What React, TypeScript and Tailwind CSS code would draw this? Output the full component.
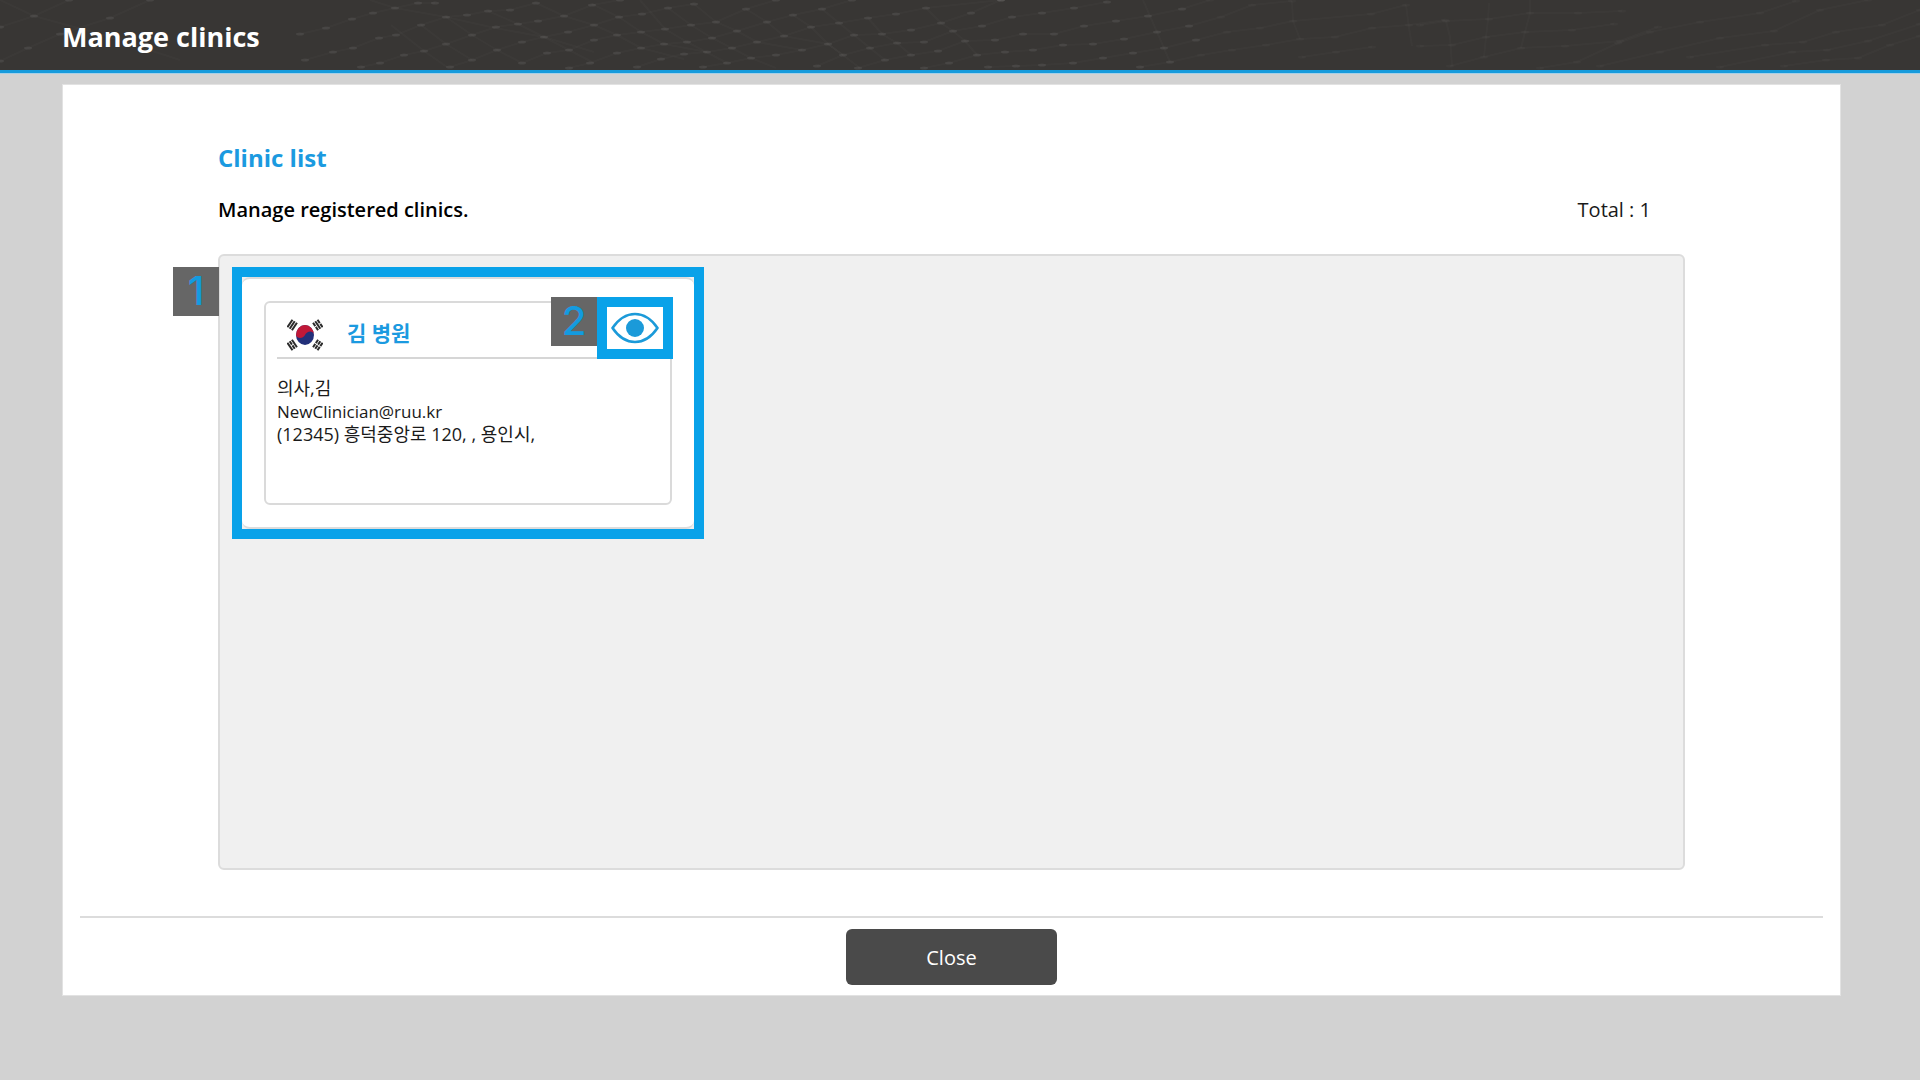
import React from "react";

type Row = [number, number][];

/* Rows of mesh nodes running behind the header title. */
const MESH_ROWS: Row[] = [
  [[0, 27], [34, 16], [69, 0]],
  [[0, 61], [28, 48], [60, 34], [110, 18], [150, 0]],
  [[300, 34], [326, 28], [352, 19], [373, 13], [395, 8], [418, 3], [435, 3]],
  [[305, 60], [333, 52], [353, 48], [379, 38], [396, 35], [421, 25], [446, 17], [467, 15], [488, 11], [510, 10], [536, 3]],
  [[361, 67], [380, 63], [404, 55], [424, 51], [446, 44], [472, 35], [496, 27], [518, 24], [538, 21], [564, 16], [592, 5], [620, 0]],
  [[450, 67], [472, 60], [497, 50], [522, 42], [544, 37], [568, 32], [594, 25], [619, 17], [642, 14], [668, 8], [694, 4]],
  [[522, 63], [547, 53], [569, 50], [594, 40], [617, 35], [641, 32], [665, 29], [691, 25], [716, 22], [746, 9], [776, 0]],
  [[569, 68], [590, 63], [617, 53], [641, 48], [664, 44], [687, 42], [712, 38], [737, 31], [767, 22], [793, 15], [822, 9], [852, 0]],
  [[637, 67], [661, 59], [684, 54], [707, 52], [732, 48], [757, 42], [784, 36], [811, 27], [839, 23], [868, 18], [896, 14], [926, 8], [1001, 0]],
  [[703, 67], [727, 63], [751, 58], [776, 55], [802, 50], [828, 44], [854, 35], [882, 34], [911, 30], [941, 23], [971, 13], [1001, 0]],
  [[817, 66], [843, 55], [870, 48], [897, 43], [924, 42], [953, 31], [982, 26], [1012, 17], [1042, 13], [1074, 8], [1107, 2]],
  [[858, 68], [885, 60], [911, 55], [938, 51], [965, 41], [995, 40], [1023, 34], [1054, 34], [1084, 26], [1116, 21], [1148, 16], [1182, 9], [1210, 0]],
  [[924, 68], [949, 63], [977, 55], [1005, 52], [1033, 50], [1063, 45], [1093, 44], [1124, 39], [1157, 32], [1189, 26], [1221, 17], [1252, 5], [1292, 1]],
  [[988, 67], [1016, 66], [1042, 65], [1073, 63], [1103, 58], [1133, 53], [1164, 48], [1196, 40], [1227, 32], [1260, 28], [1293, 21], [1371, 14], [1406, 5]],
  [[1140, 67], [1170, 62], [1201, 55], [1232, 50], [1266, 45], [1300, 39], [1335, 37], [1372, 28], [1409, 25], [1445, 20]],
  [[1302, 57], [1336, 52], [1372, 47]],
  [[1420, 25], [1446, 21], [1489, 19], [1530, 13], [1578, 13], [1622, 11]],
  [[1420, 46], [1452, 45], [1486, 37], [1525, 32], [1572, 30], [1614, 24]],
  [[1450, 66], [1484, 57], [1521, 48], [1565, 46], [1620, 41], [1658, 27]],
  [[1540, 68], [1577, 62], [1618, 43], [1650, 32], [1700, 22], [1760, 13], [1796, 1]],
  [[1600, 66], [1660, 52], [1720, 38], [1774, 31], [1820, 10], [1868, 0]],
  [[1690, 57], [1765, 45], [1803, 42], [1836, 32], [1882, 25], [1920, 10]],
  [[1720, 67], [1792, 52], [1827, 50], [1868, 41], [1920, 24]],
  [[1784, 66], [1826, 60], [1858, 58], [1890, 45], [1920, 36]],
];

const MESH_CROSS: Row[] = [
  [[370, 0], [395, 8], [446, 17], [495, 28], [544, 37], [594, 52]],
  [[391, 25], [424, 51], [447, 67]],
  [[421, 25], [446, 44], [472, 60]],
  [[446, 17], [472, 35], [497, 50], [522, 63]],
  [[488, 11], [518, 24], [544, 37], [569, 50], [594, 63]],
  [[536, 3], [564, 16], [594, 25], [617, 35], [641, 48], [684, 59]],
  [[592, 4], [619, 17], [641, 32], [664, 44], [707, 52]],
  [[640, 0], [665, 29], [687, 42], [727, 63]],
  [[668, 8], [691, 25], [712, 38], [751, 58], [776, 68]],
  [[694, 4], [716, 22], [737, 31], [757, 42], [802, 50]],
  [[746, 9], [767, 22], [784, 36], [828, 44], [860, 68]],
  [[793, 15], [811, 27], [828, 44], [843, 55]],
  [[822, 9], [839, 23], [854, 35], [870, 48], [885, 60]],
  [[868, 18], [882, 34], [897, 43], [911, 55]],
  [[926, 8], [941, 23], [953, 31], [965, 41], [977, 55]],
  [[1143, 0], [1157, 32], [1170, 62]],
  [[1292, 1], [1293, 21], [1300, 39]],
  [[1406, 5], [1409, 28], [1412, 46]],
  [[1446, 21], [1450, 37], [1452, 66]],
  [[1489, 3], [1488, 20], [1486, 37], [1484, 57]],
  [[1530, 0], [1530, 13], [1525, 32], [1521, 48]],
  [[0, 0], [34, 16], [100, 34], [180, 60]],
];

function HeaderMesh() {
  return (
    <svg
      className="absolute inset-0 h-full w-full"
      viewBox="0 0 1920 70"
      preserveAspectRatio="none"
      aria-hidden="true"
    >
      {[...MESH_ROWS, ...MESH_CROSS].map((row, i) => (
        <polyline
          key={i}
          points={row.map((p) => p.join(",")).join(" ")}
          fill="none"
          stroke="#ffffff"
          strokeOpacity="0.02"
          strokeWidth="2"
        />
      ))}
      {MESH_ROWS.flat().map(([x, y], i) => (
        <ellipse key={i} cx={x} cy={y} rx="4" ry="1.5" fill="#ffffff" fillOpacity={x > 1200 ? 0.025 : 0.07} />
      ))}
    </svg>
  );
}

function Bars({ x, y, angle, broken }: { x: number; y: number; angle: number; broken: boolean[] }) {
  return (
    <g transform={`translate(${x} ${y}) rotate(${angle})`} stroke="#2b2b2b" strokeWidth="2">
      {broken.map((b, i) => (
        <path key={i} d={b ? `M-4.500 ${i * 2.7 - 2.7}H-0.5M0.5 ${i * 2.7 - 2.7}H4.500` : `M-4.500 ${i * 2.7 - 2.7}H4.500`} />
      ))}
    </g>
  );
}

function KoreanFlag() {
  return (
    <svg className="h-9 w-9" viewBox="0 0 36 36" role="img" aria-label="South Korea">
      <Bars x={5.2} y={10} angle={-56} broken={[false, false, false]} />
      <Bars x={30.8} y={10} angle={56} broken={[true, false, true]} />
      <Bars x={5.2} y={30} angle={56} broken={[false, true, false]} />
      <Bars x={30.8} y={30} angle={-56} broken={[true, true, true]} />
      <ellipse cx="18" cy="20" rx="9" ry="10" fill="#22307a" />
      <path d="M9 20A9 10 0 0 1 27 20C26 15 20 16 18 20C16 24 10 24 9 20Z" fill="#c01838" />
    </svg>
  );
}

function EyeIcon() {
  return (
    <svg className="h-8 w-12" viewBox="0 0 48 32" aria-hidden="true">
      <path
        d="M1.500 16C8 6.500 15 2 24 2S40 6.500 46.500 16C40 25.500 33 30 24 30S8 25.500 1.500 16Z"
        fill="none"
        stroke="#1b9ad9"
        strokeWidth="2.600"
        strokeLinejoin="round"
      />
      <circle cx="24" cy="16" r="9" fill="#1b9ad9" />
    </svg>
  );
}

function Marker({ children }: { children: React.ReactNode }) {
  return (
    <span className="flex h-[49px] w-[46px] items-start justify-center bg-[#666666] font-['Inter'] text-[40px] leading-12 font-medium text-[#139be0]">
      {children}
    </span>
  );
}

export default function App() {
  return (
    <div className="flex min-h-screen flex-col bg-[#d2d2d2] font-['Open_Sans','Noto_Sans_CJK_KR',sans-serif] text-[#1a1a1a]">
      <header className="border-b border-[#a5d0e8]">
        <div className="relative flex h-[73px] items-center border-b-3 border-[#179bdc] bg-[#383634] pl-[62px]">
          <HeaderMesh />
          <h1 className="relative mt-1 text-[27px] leading-8 font-bold text-white">Manage clinics</h1>
        </div>
      </header>

      <main className="mt-2.5 mr-[79px] ml-[62px] flex flex-col border border-[#e2e2e2] bg-white px-[17px]">
        <section className="px-[138px] pt-[53px] pb-[46px]">
          <h2 className="text-[24px] leading-10 font-bold text-[#1b9ae0]">Clinic list</h2>
          <div className="mt-3 flex items-center justify-between pr-[34px]">
            <p className="text-[20px] leading-10 font-semibold text-black">Manage registered clinics.</p>
            <p className="text-[20px] leading-10">Total : 1</p>
          </div>

          <div className="relative mt-6 min-h-[616px] rounded-md border-2 border-[#dcdcdc] bg-[#f0f0f0] py-[11px] pl-3">
            <div className="absolute top-[11px] -left-[47px]">
              <Marker>1</Marker>
            </div>
            <div className="w-[472px] border-10 border-[#09a2e9] bg-[#f0f0f0]">
              <div className="rounded-lg border-y-2 border-[#dcdcdc] bg-white px-[22px] py-[22px]">
                <article className="relative h-[204px] rounded-md border-2 border-[#dadada] px-[11px]">
                  <div className="flex h-[56px] items-center border-b-2 border-[#d6d6d6] pt-1.5 pl-2.5">
                    <KoreanFlag />
                    <h3 className="ml-6 text-[21px] leading-8 font-bold text-[#1b9ae0]">김 병원</h3>
                  </div>
                  <div className="mt-[18px] text-[18px] leading-[23px]">
                    <p>의사,김</p>
                    <p className="text-[17px]">NewClinician@ruu.kr</p>
                    <p>(12345) 흥덕중앙로 120, , 용인시,</p>
                  </div>
                  <div className="absolute -top-1.5 -right-[3px] flex items-start">
                    <Marker>2</Marker>
                    <button
                      type="button"
                      aria-label="View clinic"
                      className="flex h-[62px] w-[76px] items-center justify-center border-10 border-[#09a2e9] bg-white"
                    >
                      <EyeIcon />
                    </button>
                  </div>
                </article>
              </div>
            </div>
          </div>
        </section>

        <footer className="flex justify-center border-t-2 border-[#dcdcdc] pt-[11px] pb-2.5">
          <button
            type="button"
            className="h-14 w-[211px] rounded-md bg-[#4a4a4a] pt-0.5 text-[20px] text-white"
          >
            Close
          </button>
        </footer>
      </main>
    </div>
  );
}
